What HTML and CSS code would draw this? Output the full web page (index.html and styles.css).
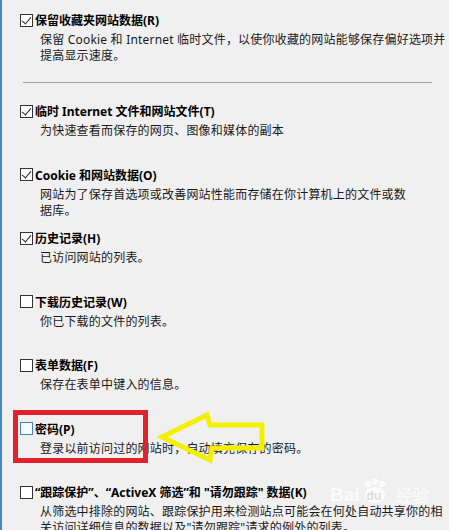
FILE: index.html
```html
<!DOCTYPE html>
<html lang="zh-CN">

<head>
  <meta charset="UTF-8" />
  <meta name="viewport" content="width=device-width, initial-scale=1.0" />
  <title>删除浏览历史记录</title>
  <link rel="stylesheet" href="styles.css">
</head>

<body>

  <div class="panel">
    <!-- 保留收藏夹 -->
    <div class="item first">
      <label class="title"><span class="box checked"></span>保留收藏夹网站数据(R)</label>
      <p class="desc">保留 Cookie 和 Internet 临时文件，以使你收藏的网站能够保存偏好选项并<br>提高显示速度。</p>
    </div>

    <hr class="divider">

    <div class="item">
      <label class="title"><span class="box checked"></span>临时 Internet 文件和网站文件(T)</label>
      <p class="desc">为快速查看而保存的网页、图像和媒体的副本</p>
    </div>

    <div class="item">
      <label class="title"><span class="box checked"></span>Cookie 和网站数据(O)</label>
      <p class="desc">网站为了保存首选项或改善网站性能而存储在你计算机上的文件或数<br>据库。</p>
    </div>

    <div class="item">
      <label class="title"><span class="box checked"></span>历史记录(H)</label>
      <p class="desc">已访问网站的列表。</p>
    </div>

    <div class="item">
      <label class="title"><span class="box"></span>下载历史记录(W)</label>
      <p class="desc">你已下载的文件的列表。</p>
    </div>

    <div class="item">
      <label class="title"><span class="box"></span>表单数据(F)</label>
      <p class="desc">保存在表单中键入的信息。</p>
    </div>

    <div class="item">
      <label class="title"><span class="box hover"></span>密码(P)</label>
      <p class="desc">登录以前访问过的网站时，自动填充保存的密码。</p>
    </div>

    <div class="item">
      <label class="title"><span class="box"></span>“跟踪保护”、“ActiveX 筛选”和 "请勿跟踪" 数据(K)</label>
      <p class="desc">从筛选中排除的网站、跟踪保护用来检测站点可能会在何处自动共享你的相<br>关访问详细信息的数据以及"请勿跟踪"请求的例外的列表。</p>
    </div>
  </div>

  <!-- 标注 -->
  <div class="mark"></div>
  <svg class="arrow" width="120" height="60" viewBox="155 408 120 60">
    <polygon points="162,437 207,415 210,425 262,425 262,448 212,448 210,460" fill="none" stroke="#f3ef00" stroke-width="5" stroke-linejoin="miter" />
  </svg>

  <div class="watermark">
    <span class="wm-bai">Bai</span>
    <span class="paw">
      <svg width="30" height="26" viewBox="0 0 30 26">
        <circle cx="8" cy="6" r="3.2" />
        <circle cx="15" cy="3.5" r="3.2" />
        <circle cx="22" cy="6" r="3.2" />
        <ellipse cx="15" cy="17" rx="10" ry="8" />
      </svg>
      <span class="wm-du">du</span>
    </span>
    <span class="wm-jy">经验</span>
  </div>

</body>

</html>
```

FILE: styles.css
```css
* {
  box-sizing: border-box;
}
html, body {
  margin: 0;
  height: 100%;
  overflow: hidden;
}
body {
  font-family: "Noto Sans", "Noto Sans CJK SC", sans-serif;
  font-size: 12px;
  color: #111;
  background-color: #f0f0f0;
  border-left: 2px solid #4a88c6;
  position: relative;
}
.panel {
  padding: 10px 0 0 18px;
}
.item {
  height: 63.5px;
}
.item.first {
  height: auto;
}
.title {
  display: flex;
  align-items: center;
  height: 20px;
  font-weight: bold;
  color: #000;
  white-space: nowrap;
}
.box {
  width: 13px;
  height: 13px;
  border: 1px solid #333;
  background: #fff;
  margin-right: 2px;
  flex: none;
  position: relative;
}
.box.checked::after {
  content: "";
  position: absolute;
  left: 3px;
  top: 0px;
  width: 4px;
  height: 8px;
  border-right: 1px solid #222;
  border-bottom: 1px solid #222;
  transform: rotate(40deg);
}
.box.hover {
  border-color: #3f86c8;
  background: #f7fbff;
}
.desc {
  margin: 2px 0 0 20px;
  line-height: 16px;
  letter-spacing: 0.2px;
  white-space: nowrap;
  color: #1a1a1a;
}
.divider {
  border: none;
  border-top: 1px solid #a5a5a5;
  margin: 18px 17px 18px 3px;
}
.mark {
  position: absolute;
  left: 11px;
  top: 410px;
  width: 135px;
  height: 53px;
  border: 5px solid #e1222b;
}
.arrow {
  position: absolute;
  left: 153px;
  top: 408px;
}
.watermark {
  position: absolute;
  left: 328px;
  top: 478px;
  display: flex;
  align-items: flex-end;
  color: rgba(255, 255, 255, 0.75);
  font-family: "Liberation Sans", sans-serif;
  font-size: 19px;
  font-weight: bold;
  line-height: 22px;
}
.paw {
  position: relative;
  display: flex;
  margin: 0 6px 2px 0;
}
.paw svg {
  fill: rgba(255, 255, 255, 0.7);
}
.wm-du {
  position: absolute;
  left: 7px;
  bottom: 1px;
  color: rgba(190, 190, 190, 0.55);
  font-size: 12px;
  line-height: 14px;
}
.wm-jy {
  font-family: "Noto Sans CJK SC", sans-serif;
  font-size: 17px;
  font-weight: normal;
}
```
